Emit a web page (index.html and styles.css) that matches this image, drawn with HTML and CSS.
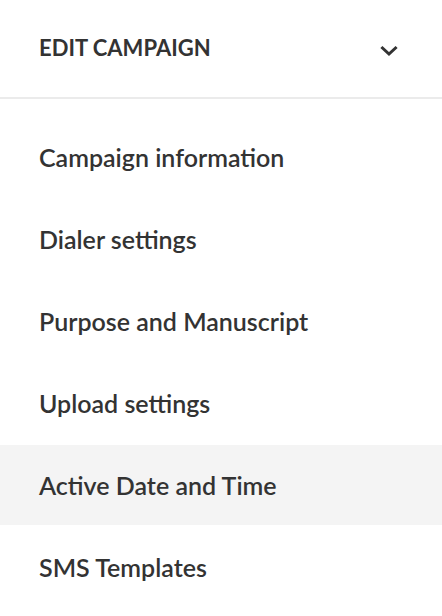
FILE: index.html
```html
<!DOCTYPE html>
<html>
<head>
<meta charset="utf-8">
<link rel="stylesheet" href="styles.css">
</head>
<body>
<div class="panel">
  <div class="header">
    <span class="title">EDIT CAMPAIGN</span>
    <svg class="chev" width="18" height="12" viewBox="0 0 18 12"><path d="M2.5 3 L9 9 L15.5 3" fill="none" stroke="#333" stroke-width="3" stroke-linecap="square"/></svg>
  </div>
  <ul class="menu">
    <li class="item">Campaign information</li>
    <li class="item">Dialer settings</li>
    <li class="item">Purpose and Manuscript</li>
    <li class="item">Upload settings</li>
    <li class="item active">Active Date and Time</li>
    <li class="item">SMS Templates</li>
  </ul>
</div>
</body>
</html>
```
FILE: styles.css
```css
html, body { margin: 0; padding: 0; background: #fff; }
body { font-family: Lato, "Open Sans", sans-serif; color: #333; }
.panel { width: 442px; }
.header {
  height: 99px;
  border-bottom: 2px solid #ebebeb;
  display: flex;
  align-items: center;
  justify-content: space-between;
  padding: 0 44px 0 39px;
  box-sizing: border-box;
}
.title { font-size: 22px; font-weight: 700; letter-spacing: 0; margin-top: -2px; }
.chev { display: block; margin-top: 4px; }
.menu { list-style: none; margin: 0; padding: 18px 0 0; display: flex; flex-direction: column; gap: 2px; }
.item {
  height: 80px;
  display: flex;
  align-items: center;
  padding-left: 39px;
  font-size: 25px;
  font-weight: 600;
}
.item.active { background: #f4f4f4; }
```
